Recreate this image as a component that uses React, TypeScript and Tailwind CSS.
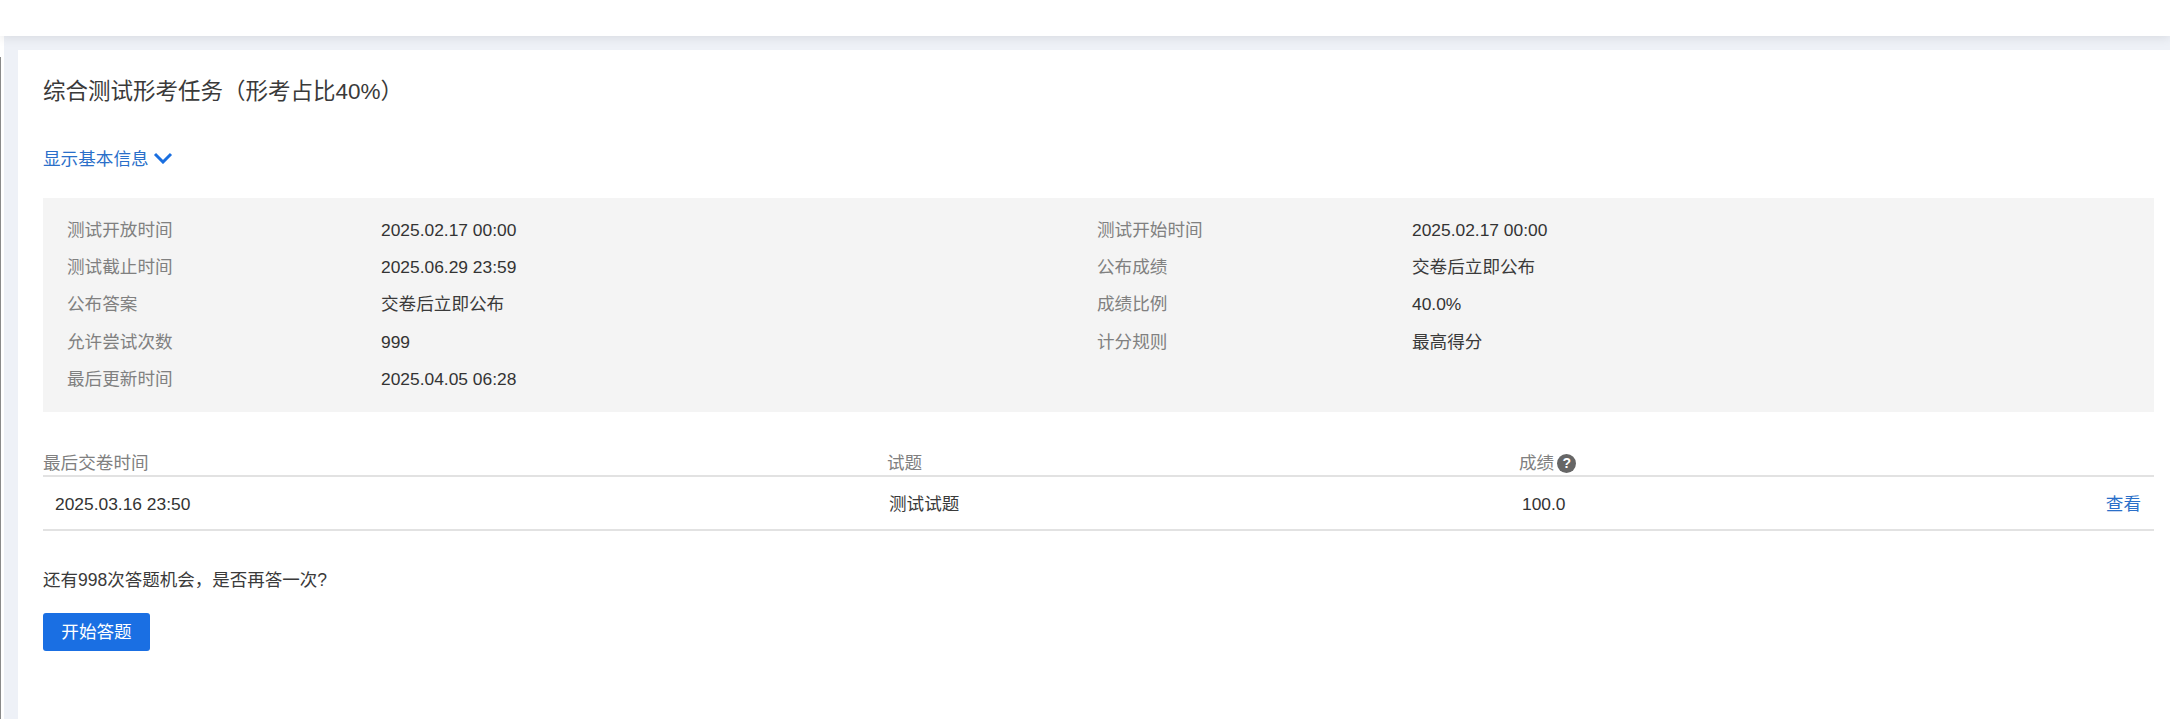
const font = { fontFamily: '"Liberation Sans", "Noto Sans CJK SC", sans-serif' };

const rows: [string, string, string?, string?][] = [
  ["测试开放时间", "2025.02.17 00:00", "测试开始时间", "2025.02.17 00:00"],
  ["测试截止时间", "2025.06.29 23:59", "公布成绩", "交卷后立即公布"],
  ["公布答案", "交卷后立即公布", "成绩比例", "40.0%"],
  ["允许尝试次数", "999", "计分规则", "最高得分"],
  ["最后更新时间", "2025.04.05 06:28"],
];

function Value({ children }: { children?: string }) {
  const cjk = /[^\x00-\x7f]/.test(children ?? "");
  return cjk ? <span className="text-[17.6px] text-[#3a3a3a]">{children}</span> : <span>{children}</span>;
}

export default function App() {
  return (
    <div style={font} className="h-[719px] w-[2170px] overflow-hidden bg-white text-[17.4px] text-[#333333]">
      <header className="relative z-10 h-9 bg-white shadow-[0_2px_10px_rgba(0,0,0,0.09)]" />
      <div className="flex h-[683px]">
        <aside className="w-1 bg-white pt-[21px]">
          <div className="h-full w-px bg-[#8a8a8a]" />
        </aside>
        <main className="flex-1 bg-[#eef1f7] pl-[14px] pt-[14px]">
          <section className="relative z-20 h-full bg-white pl-[25px] pr-4">
            <h1 className="pt-[26px] text-[22.5px] leading-[32px] text-[#3a3a3a]">综合测试形考任务（形考占比40%）</h1>
            <button className="mt-[37px] flex h-7 items-center gap-[4px] text-[17.6px] text-[#2a6fc9]">
              显示基本信息
              <svg width="20" height="12" viewBox="0 0 20 12" fill="none" stroke="#1a6fe0" strokeWidth="3" className="-mt-[2px]">
                <path d="M2 2l8 8 8-8" />
              </svg>
            </button>
            <div className="mt-[25px] grid h-[214px] grid-cols-[1029px_1fr] content-start bg-[#f4f4f4] pl-[24px] pr-[25px] py-[13px]">
              {rows.map((r) => (
                <div key={r[0]} className="col-span-2 grid h-[37.4px] grid-cols-[1030px_1fr] items-center">
                  <div className="grid grid-cols-[314px_1fr] items-center">
                    <span className="text-[17.6px] text-[#808080]">{r[0]}</span>
                    <Value>{r[1]}</Value>
                  </div>
                  {r[2] && (
                    <div className="grid grid-cols-[315px_1fr] items-center">
                      <span className="text-[17.6px] text-[#808080]">{r[2]}</span>
                      <Value>{r[3]}</Value>
                    </div>
                  )}
                </div>
              ))}
            </div>
            <div className="mt-[38px] grid h-[27px] grid-cols-[844px_632px_1fr] items-center border-b-2 border-[#e2e2e2] pb-[2px] text-[17.6px] text-[#808080]">
              <span>最后交卷时间</span>
              <span>试题</span>
              <span className="flex items-center gap-[3px]">
                成绩
                <span className="flex h-[19px] w-[19px] items-center justify-center rounded-full bg-[#666666] text-[14px] font-bold leading-none text-white">?</span>
              </span>
            </div>
            <div className="grid h-[54px] grid-cols-[844px_632px_1fr_auto] items-center border-b-2 border-[#e2e2e2] pr-[13px] pt-[2px]">
              <span className="pl-[12px]">2025.03.16 23:50</span>
              <span className="pl-[2px] text-[17.6px] text-[#3a3a3a]">测试试题</span>
              <span className="pl-[3px]">100.0</span>
              <span className="text-[17.6px] text-[#2a6fc9]">查看</span>
            </div>
            <p className="mt-[36px] text-[17.5px] leading-[26px] text-[#3a3a3a]">还有998次答题机会，是否再答一次?</p>
            <button className="mt-[20px] h-[38px] w-[107px] rounded-[3px] bg-[#1a6fe3] text-[17.6px] text-white">开始答题</button>
          </section>
        </main>
      </div>
    </div>
  );
}
